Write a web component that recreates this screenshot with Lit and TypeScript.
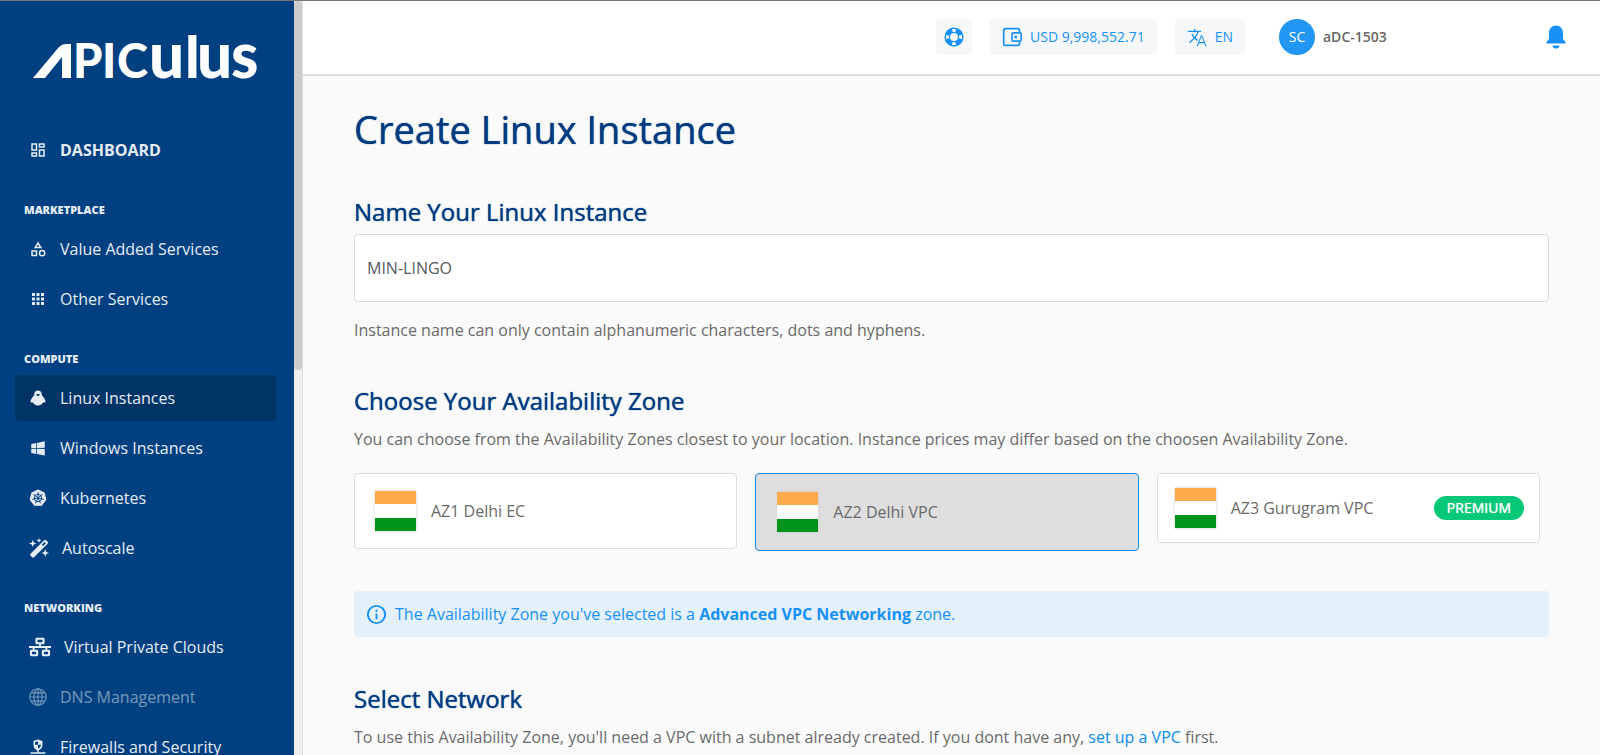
import { LitElement, html, svg, css, nothing } from "lit";
import { customElement, property, state } from "lit/decorators.js";
import { classMap } from "lit/directives/class-map.js";

const star = (cx: number, cy: number, r: number) => {
  const q = r * 0.28;
  return `M${cx} ${cy - r}L${cx + q} ${cy - q}L${cx + r} ${cy}L${cx + q} ${cy + q}L${cx} ${cy + r}L${cx - q} ${cy + q}L${cx - r} ${cy}L${cx - q} ${cy - q}Z`;
};

const spokes = [0, 1, 2, 3, 4, 5, 6].map((i) => {
  const a = (i * 2 * Math.PI) / 7 - Math.PI / 2;
  return `M12 12L${(12 + 8 * Math.cos(a)).toFixed(2)} ${(12 + 8 * Math.sin(a)).toFixed(2)}`;
}).join("");

const ICONS: Record<string, unknown> = {
  dashboard: svg`<path d="M19 5v2h-4V5h4M9 5v6H5V5h4m10 8v6h-4v-6h4M9 17v2H5v-2h4M21 3h-8v6h8V3zM11 3H3v10h8V3zm10 8h-8v10h8V11zm-10 4H3v6h8v-6z"/>`,
  category: svg`<path d="M12 2l-5.500 9h11L12 2zm0 3.840L13.930 9h-3.870L12 5.840zM17.500 13a4.500 4.500 0 100 9 4.500 4.500 0 000-9zm0 7a2.500 2.500 0 010-5 2.500 2.500 0 010 5zM3 21.500h8v-8H3v8zm2-6h4v4H5v-4z"/>`,
  apps: svg`<path d="M4 8h4V4H4v4zm6 12h4v-4h-4v4zm-6 0h4v-4H4v4zm0-6h4v-4H4v4zm6 0h4v-4h-4v4zm6-10v4h4V4h-4zm-6 4h4V4h-4v4zm6 6h4v-4h-4v4zm0 6h4v-4h-4v4z"/>`,
  linux: svg`<path fill-rule="evenodd" d="M12 2c-3 0-5 2.200-5 5.200 0 1-.6 1.800-1.500 2.800C3.700 11.900 2 14.500 2 17c0 .9.7 1.200 1.500 1 .8-.2 1.500-.3 2 .3C6.800 20.500 9.300 22 12 22s5.200-1.500 6.500-3.700c.5-.6 1.200-.5 2-.3.8.2 1.500-.1 1.500-1 0-2.500-1.700-5.100-3.500-7-.9-1-1.500-1.800-1.500-2.800C17 4.200 15 2 12 2zM9 7.200c1.900-.9 4.100-.9 6 0L12 9.600z"/>`,
  windows: svg`<path d="M3 12V6.750l6.500-1.320v6.480L3 12m18-9v8.750l-10.500.15V5.210L21 3M3 13l6.500.09v6.810L3 18.750V13m18 .25V22l-10.500-1.910V13.100l10.500.15z"/>`,
  kubernetes: svg`<path d="M12 1.500l8.200 3.900 2.100 8.900-5.700 7.200H7.400l-5.700-7.200 2.100-8.900z" stroke="currentColor" stroke-width="1.500" stroke-linejoin="round"/><g class="cut"><circle cx="12" cy="12" r="5"/><path d="${spokes}"/></g>`,
  wand: svg`<path fill-rule="evenodd" d="M2.100 18.700L17.900 2.900a2 2 0 012.800 0l1.400 1.400a2 2 0 010 2.800L6.300 22.900a2 2 0 01-2.800 0l-1.400-1.400a2 2 0 010-2.800zM15.400 8.200l1.500 1.500 3.400-3.400-1.500-1.500z"/><path d="${star(4.500, 6.500, 4.400)}${star(12, 3, 3)}${star(19.500, 18, 4.500)}"/>`,
  network: svg`<path fill-rule="evenodd" d="M8.500 2h7A1.500 1.500 0 0117 3.500v4A1.500 1.500 0 0115.500 9H13v2h11v2h-4v2h1.500a1.500 1.500 0 011.500 1.500v4a1.500 1.500 0 01-1.500 1.500h-6a1.500 1.500 0 01-1.500-1.500v-4a1.500 1.500 0 011.500-1.500H18v-2H6v2h2.500a1.500 1.500 0 011.500 1.500v4A1.500 1.500 0 018.500 22h-6A1.500 1.500 0 011 20.500v-4A1.500 1.500 0 012.500 15H4v-2H0v-2h11V9H8.500A1.500 1.500 0 017 7.500v-4A1.500 1.500 0 018.500 2zM9.300 4.200v2.600h5.400V4.200zM3.300 17.200v2.600h4.400v-2.600zM16.300 17.200v2.600h4.400v-2.600z"/>`,
  globe: svg`<g fill="none" stroke="currentColor" stroke-width="1.500"><circle cx="12" cy="12" r="11"/><ellipse cx="12" cy="12" rx="5.500" ry="11"/><path d="M12 1v22M1 12h22M2.800 6.500h18.400M2.800 17.500h18.400"/></g>`,
  firewall: svg`<path fill-rule="evenodd" d="M12 2l6 2v5c0 4-2.500 6.500-5 7.500V19h9v2H2v-2h9v-2.500C8.500 15.500 6 13 6 9V4zM12 4.200L8 5.500V9h4zM12 9v5.200c2-.8 3.800-2.700 4-5.200z"/>`,
  lifebuoy: svg`<path fill-rule="evenodd" d="M12 .5a11.500 11.500 0 100 23 11.500 11.500 0 000-23zm0 6.700a4.800 4.800 0 110 9.600 4.800 4.800 0 010-9.600zM9.300 2.700a9.700 9.700 0 015.400 0l-1.300 3.400a6 6 0 00-2.800 0zM9.300 21.300a9.700 9.700 0 005.400 0l-1.300-3.400a6 6 0 01-2.800 0zM2.700 9.300a9.700 9.700 0 000 5.400l3.400-1.300a6 6 0 010-2.800zM21.300 9.300a9.700 9.700 0 010 5.400l-3.400-1.300a6 6 0 000-2.800z"/>`,
  wallet: svg`<g fill="none" stroke="currentColor" stroke-width="2"><path d="M21 7V4a2 2 0 00-2-2H4a2 2 0 00-2 2v16a2 2 0 002 2h15a2 2 0 002-2v-3"/><rect x="12" y="7" width="11" height="10" rx="1.500"/></g><circle cx="16.500" cy="12" r="1.700"/>`,
  translate: svg`<path d="M12.870 15.070l-2.540-2.510.03-.03A17.520 17.520 0 0014.070 6H17V4.500h-7V2H8.500v2.500H1V6h11.500C11.700 8.300 10.600 10.100 9 11.800 8.070 10.600 7.300 9.400 6.690 8h-1.500c.73 1.800 1.700 3.400 2.900 4.800L2.500 18.300l1.100 1.100L9 14l3.200 3.200zM18.200 10h-1.400L11.500 23H13l1.300-3.500h6.400L22 23h1.500zm-3.400 8l2.700-6.500 2.700 6.500z"/>`,
  bell: svg`<path d="M12 .5c-4.300 0-7 3.200-7 7.500v6L2.500 17v1.500h19V17L19 14V8c0-4.300-2.700-7.500-7-7.500zM8.500 20.500a3.500 3 0 007 0z"/>`,
  info: svg`<path d="M11 7h2v2h-2zm0 4h2v6h-2zm1-9a10 10 0 100 20 10 10 0 000-20zm0 18a8 8 0 110-16 8 8 0 010 16z"/>`,
};

@customElement("ui-icon")
class UiIcon extends LitElement {
  @property() name = "";
  @property({ type: Number }) size = 18;
  static styles = css`
    :host { display: flex; flex: none; }
    svg { display: block; fill: currentColor; }
    .cut { fill: none; stroke: #004080; stroke-width: 1.200; }
  `;
  render() {
    return html`<svg width=${this.size} height=${this.size} viewBox="0 0 24 24" aria-hidden="true">${ICONS[this.name]}</svg>`;
  }
}

interface Item { icon: string; text: string; size?: number; off?: boolean; strong?: boolean }

const MENU: { title?: string; items: Item[] }[] = [
  { items: [{ icon: "dashboard", text: "DASHBOARD", strong: true }] },
  { title: "MARKETPLACE", items: [
    { icon: "category", text: "Value Added Services" },
    { icon: "apps", text: "Other Services" },
  ] },
  { title: "COMPUTE", items: [
    { icon: "linux", text: "Linux Instances" },
    { icon: "windows", text: "Windows Instances" },
    { icon: "kubernetes", text: "Kubernetes" },
    { icon: "wand", text: "Autoscale", size: 20 },
  ] },
  { title: "NETWORKING", items: [
    { icon: "network", text: "Virtual Private Clouds", size: 22 },
    { icon: "globe", text: "DNS Management", off: true },
    { icon: "firewall", text: "Firewalls and Security" },
  ] },
];

@customElement("side-nav")
class SideNav extends LitElement {
  @state() private current = "Linux Instances";
  static styles = css`
    :host { display: flex; flex: none; overflow: hidden; }
    .panel { width: 294px; box-sizing: border-box; background: #004080; padding: 12px 18px 0 15px; }
    .logo { display: block; margin: 0 0 30px 18px; overflow: visible; }
    .logo text { fill: #fff; font-family: Lato, sans-serif; font-weight: 900; }
    .caps { font-size: 47px; }
    .low { font-size: 62px; }
    .ell { font-size: 58px; }
    .mark { fill: #fff; }
    .group { display: flex; flex-direction: column; gap: 4px; }
    h2 { margin: 29px 0 4px 9px; font-size: 11px; line-height: 16px; font-weight: 800; color: #e6ecf3; }
    a {
      display: flex; align-items: center; gap: 13px; height: 46px; padding-left: 14px; border-radius: 4px;
      color: #e6ecf3; font-size: 16px; text-decoration: none; white-space: nowrap;
    }
    .strong { font-weight: 700; }
    .current { background: #003366; }
    .off { opacity: 0.5; }
    .track { width: 8px; background: #eee; border-right: 1px solid #ddd; }
    .thumb { height: 49%; border-radius: 4px; background: #ccc; }
  `;
  render() {
    return html`
      <nav class="panel">
        <svg class="logo" width="232" height="84" viewBox="0 -20 232 84" role="img" aria-label="Apiculus">
          <path class="mark" d="M0 45L26 14Q29 11 33 11H38V45H29V24L12 45Z"/>
          <text y="45"><tspan class="caps" x="40 69 84">PIC</tspan><tspan class="low" x="116">u</tspan><tspan class="ell" x="152">l</tspan><tspan class="low" x="164 198">us</tspan></text>
        </svg>
        ${MENU.map((g) => html`
          <div class="group">
            ${g.title ? html`<h2>${g.title}</h2>` : nothing}
            ${g.items.map((i) => html`
              <a href="#" class=${classMap({ strong: !!i.strong, off: !!i.off, current: i.text === this.current })}
                @click=${(e: Event) => { e.preventDefault(); if (!i.off) this.current = i.text; }}>
                <ui-icon name=${i.icon} .size=${i.size ?? 18}></ui-icon><span>${i.text}</span>
              </a>`)}
          </div>`)}
      </nav>
      <div class="track"><div class="thumb"></div></div>
    `;
  }
}

@customElement("top-bar")
class TopBar extends LitElement {
  static styles = css`
    :host {
      display: flex; align-items: center; justify-content: flex-end; gap: 18px; flex: none; height: 71px;
      padding: 0 32px 2px 0; background: #fff; border-bottom: 2px solid #e0e0e0;
    }
    button {
      display: flex; align-items: center; gap: 8px; margin: 0; padding: 0; border: 0; background: none;
      font: inherit; font-size: 14px; color: #1890f8;
    }
    .chip { height: 36px; padding: 0 12px; border-radius: 4px; background: #f5f7f9; }
    .square { padding: 0 8px; }
    .user { width: 265px; margin-left: 16px; margin-right: -18px; font-weight: 600; color: #666; }
    .avatar {
      width: 36px; line-height: 36px; border-radius: 50%; text-align: center; background: #2196f3;
      color: #fff; font-weight: 400;
    }
  `;
  render() {
    return html`
      <button class="chip square" aria-label="Help"><ui-icon name="lifebuoy" .size=${20}></ui-icon></button>
      <button class="chip"><ui-icon name="wallet" .size=${20}></ui-icon>USD 9,998,552.71</button>
      <button class="chip"><ui-icon name="translate" .size=${20}></ui-icon>EN</button>
      <button class="user"><span class="avatar">SC</span>aDC-1503</button>
      <button aria-label="Notifications"><ui-icon name="bell" .size=${24}></ui-icon></button>
    `;
  }
}

@customElement("create-form")
class CreateForm extends LitElement {
  @state() private zone = "az2";
  static styles = css`
    :host { display: block; flex: 1; padding: 27px 51px 0 51px; color: #6a6a6a; font-size: 16px; line-height: 24px; }
    h1, h2, .title {
      display: block; margin: 0; color: #003b80; font-weight: 400; text-shadow: 0 0 1px #003b80;
    }
    h1 { font-size: 38px; line-height: 52px; margin-bottom: 41px; }
    h2, .title { font-size: 24px; line-height: 32px; }
    p { margin: 0; }
    .name {
      display: block; box-sizing: border-box; width: 100%; height: 68px; margin: 6px 0 16px; padding: 0 12px;
      border: 1px solid #d5dae0; border-radius: 4px; background: #fff; font: inherit; color: #555b62; outline: 0;
    }
    section { padding-top: 43px; }
    section p { margin-top: 10px; }
    fieldset {
      display: grid; grid-template-columns: repeat(3, 1fr); gap: 18px; align-items: start;
      margin: 22px 9px 40px 0; padding: 0; border: 0; min-width: 0;
    }
    .zone {
      display: flex; align-items: center; gap: 15px; padding: 17px 20px; border: 1px solid #ddd;
      border-radius: 4px; background: #fff;
    }
    .zone input { position: absolute; opacity: 0; pointer-events: none; }
    .premium { padding: 14px 15px 14px 17px; }
    .chosen { padding: 18px 21px; border-color: #0d8bf2; background: #dedede; }
    .flag {
      width: 41px; height: 40px; box-shadow: 0 0 3px #ccc;
      background: linear-gradient(#ffa94d 33%, #fff 33% 67%, #00931b 67%);
    }
    .badge {
      margin-left: auto; padding: 0 13px; border-radius: 12px; background: #06c877; color: #fff;
      font-size: 14px; text-shadow: 0 0 1px #fff;
    }
    .info {
      display: flex; align-items: center; gap: 7px; margin-bottom: 46px; padding: 11px; border-radius: 4px;
      background: #e4f0fa; color: #1890f8;
    }
    .info + h2 { margin-top: 0; }
    a { color: #0d8bf2; text-decoration: none; }
  `;
  private option(id: string, text: string, premium = false) {
    return html`
      <label class=${classMap({ zone: true, premium, chosen: this.zone === id })}>
        <input type="radio" name="zone" .checked=${this.zone === id} @change=${() => { this.zone = id; }}>
        <span class="flag"></span><span>${text}</span>
        ${premium ? html`<span class="badge">PREMIUM</span>` : nothing}
      </label>`;
  }
  render() {
    return html`
      <h1>Create Linux Instance</h1>
      <label class="title" for="name">Name Your Linux Instance</label>
      <input class="name" id="name" type="text" value="MIN-LINGO">
      <p>Instance name can only contain alphanumeric characters, dots and hyphens.</p>
      <section>
        <h2>Choose Your Availability Zone</h2>
        <p>You can choose from the Availability Zones closest to your location. Instance prices may differ based on the choosen Availability Zone.</p>
        <fieldset aria-label="Availability Zone">
          ${this.option("az1", "AZ1 Delhi EC")}
          ${this.option("az2", "AZ2 Delhi VPC")}
          ${this.option("az3", "AZ3 Gurugram VPC", true)}
        </fieldset>
        <div class="info">
          <ui-icon name="info" .size=${23}></ui-icon>
          <span>The Availability Zone you've selected is a <b>Advanced VPC Networking</b> zone.</span>
        </div>
        <h2>Select Network</h2>
        <p>To use this Availability Zone, you'll need a VPC with a subnet already created. If you dont have any, <a href="#">set up a VPC</a> first.</p>
      </section>
    `;
  }
}

@customElement("app-root")
class AppRoot extends LitElement {
  static styles = css`
    :host {
      display: flex; box-sizing: border-box; height: 100vh; overflow: hidden; border-top: 1px solid #777;
      background: #fafafa; font-family: "Open Sans", "Noto Sans", sans-serif;
    }
    .page { display: flex; flex-direction: column; flex: 1; min-width: 0; }
  `;
  render() {
    return html`<side-nav></side-nav><div class="page"><top-bar></top-bar><create-form></create-form></div>`;
  }
}
